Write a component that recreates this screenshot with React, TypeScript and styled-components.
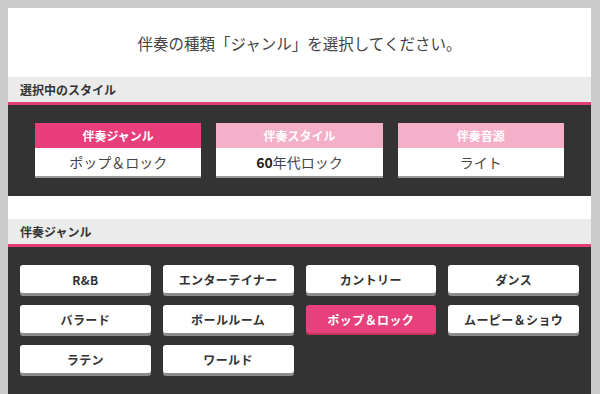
import React from "react";
import styled, { createGlobalStyle } from "styled-components";

const Global = createGlobalStyle`
  html, body { margin: 0; padding: 0; }
  body {
    background: #cbcbcb;
    font-family: "Noto Sans CJK JP", "Noto Sans", sans-serif;
    overflow: hidden;
  }
`;

const Page = styled.div`
  padding: 8px 9px 0 8px;
  height: 394px;
  box-sizing: border-box;
`;

const Panel = styled.div`
  background: #ffffff;
  height: 100%;
  display: flex;
  flex-direction: column;
`;

const Title = styled.h1`
  margin: 0;
  height: 70px;
  display: flex;
  align-items: center;
  justify-content: center;
  font-size: 15.5px;
  font-weight: 400;
  color: #444;
  padding-top: 1px;
  box-sizing: border-box;
`;

const SectionHead = styled.div`
  height: 25px;
  background: #ebebeb;
  border-bottom: 3px solid #e43e79;
  display: flex;
  align-items: center;
  padding-left: 12px;
  font-size: 12px;
  font-weight: 700;
  color: #333;
`;

const Dark = styled.div<{ $grow?: boolean }>`
  background: #333333;
  flex: ${(p) => (p.$grow ? 1 : "none")};
`;

const CardGrid = styled.div`
  display: grid;
  grid-template-columns: repeat(3, 1fr);
  column-gap: 15px;
  padding: 18px 27px;
`;

const Card = styled.div`
  display: flex;
  flex-direction: column;
`;

const CardHead = styled.div<{ $active?: boolean }>`
  height: 25px;
  background: ${(p) => (p.$active ? "#e83e7c" : "#f5b0c9")};
  color: #fff;
  font-size: 12px;
  font-weight: 700;
  display: flex;
  align-items: center;
  justify-content: center;
`;

const CardBody = styled.div`
  height: 28px;
  background: #fff;
  border-bottom: 2px solid #9a9a9a;
  display: flex;
  align-items: center;
  justify-content: center;
  font-size: 14px;
  color: #444;
  b { font-weight: 700; color: #222; }
`;

const Gap = styled.div`
  height: 24px;
`;

const ButtonGrid = styled.div`
  display: grid;
  grid-template-columns: repeat(4, 1fr);
  column-gap: 12px;
  row-gap: 9px;
  padding: 18px 12px;
`;

const GenreButton = styled.button<{ $active?: boolean }>`
  height: 28px;
  margin-bottom: 3px;
  border: none;
  border-radius: 3px;
  background: ${(p) => (p.$active ? "#e8407c" : "#ffffff")};
  box-shadow: ${(p) => (p.$active ? "0 2px 0 #c2335f" : "0 3px 0 #8c8c8c")};
  color: ${(p) => (p.$active ? "#fff" : "#333")};
  font-family: inherit;
  font-size: 12px;
  font-weight: 700;
  letter-spacing: 0.4px;
  padding: 0;
  cursor: pointer;
`;

const genres = [
  "R&B",
  "エンターテイナー",
  "カントリー",
  "ダンス",
  "バラード",
  "ボールルーム",
  "ポップ＆ロック",
  "ムーピー＆ショウ",
  "ラテン",
  "ワールド",
];

export default function App() {
  return (
    <>
      <Global />
      <Page>
        <Panel>
          <Title>伴奏の種類「ジャンル」を選択してください。</Title>
          <SectionHead>選択中のスタイル</SectionHead>
          <Dark>
            <CardGrid>
              <Card>
                <CardHead $active>伴奏ジャンル</CardHead>
                <CardBody>ポップ＆ロック</CardBody>
              </Card>
              <Card>
                <CardHead>伴奏スタイル</CardHead>
                <CardBody>
                  <b>60</b>年代ロック
                </CardBody>
              </Card>
              <Card>
                <CardHead>伴奏音源</CardHead>
                <CardBody>ライト</CardBody>
              </Card>
            </CardGrid>
          </Dark>
          <Gap />
          <SectionHead>伴奏ジャンル</SectionHead>
          <Dark $grow>
            <ButtonGrid>
              {genres.map((g) => (
                <GenreButton key={g} $active={g === "ポップ＆ロック"}>
                  {g}
                </GenreButton>
              ))}
            </ButtonGrid>
          </Dark>
        </Panel>
      </Page>
    </>
  );
}
